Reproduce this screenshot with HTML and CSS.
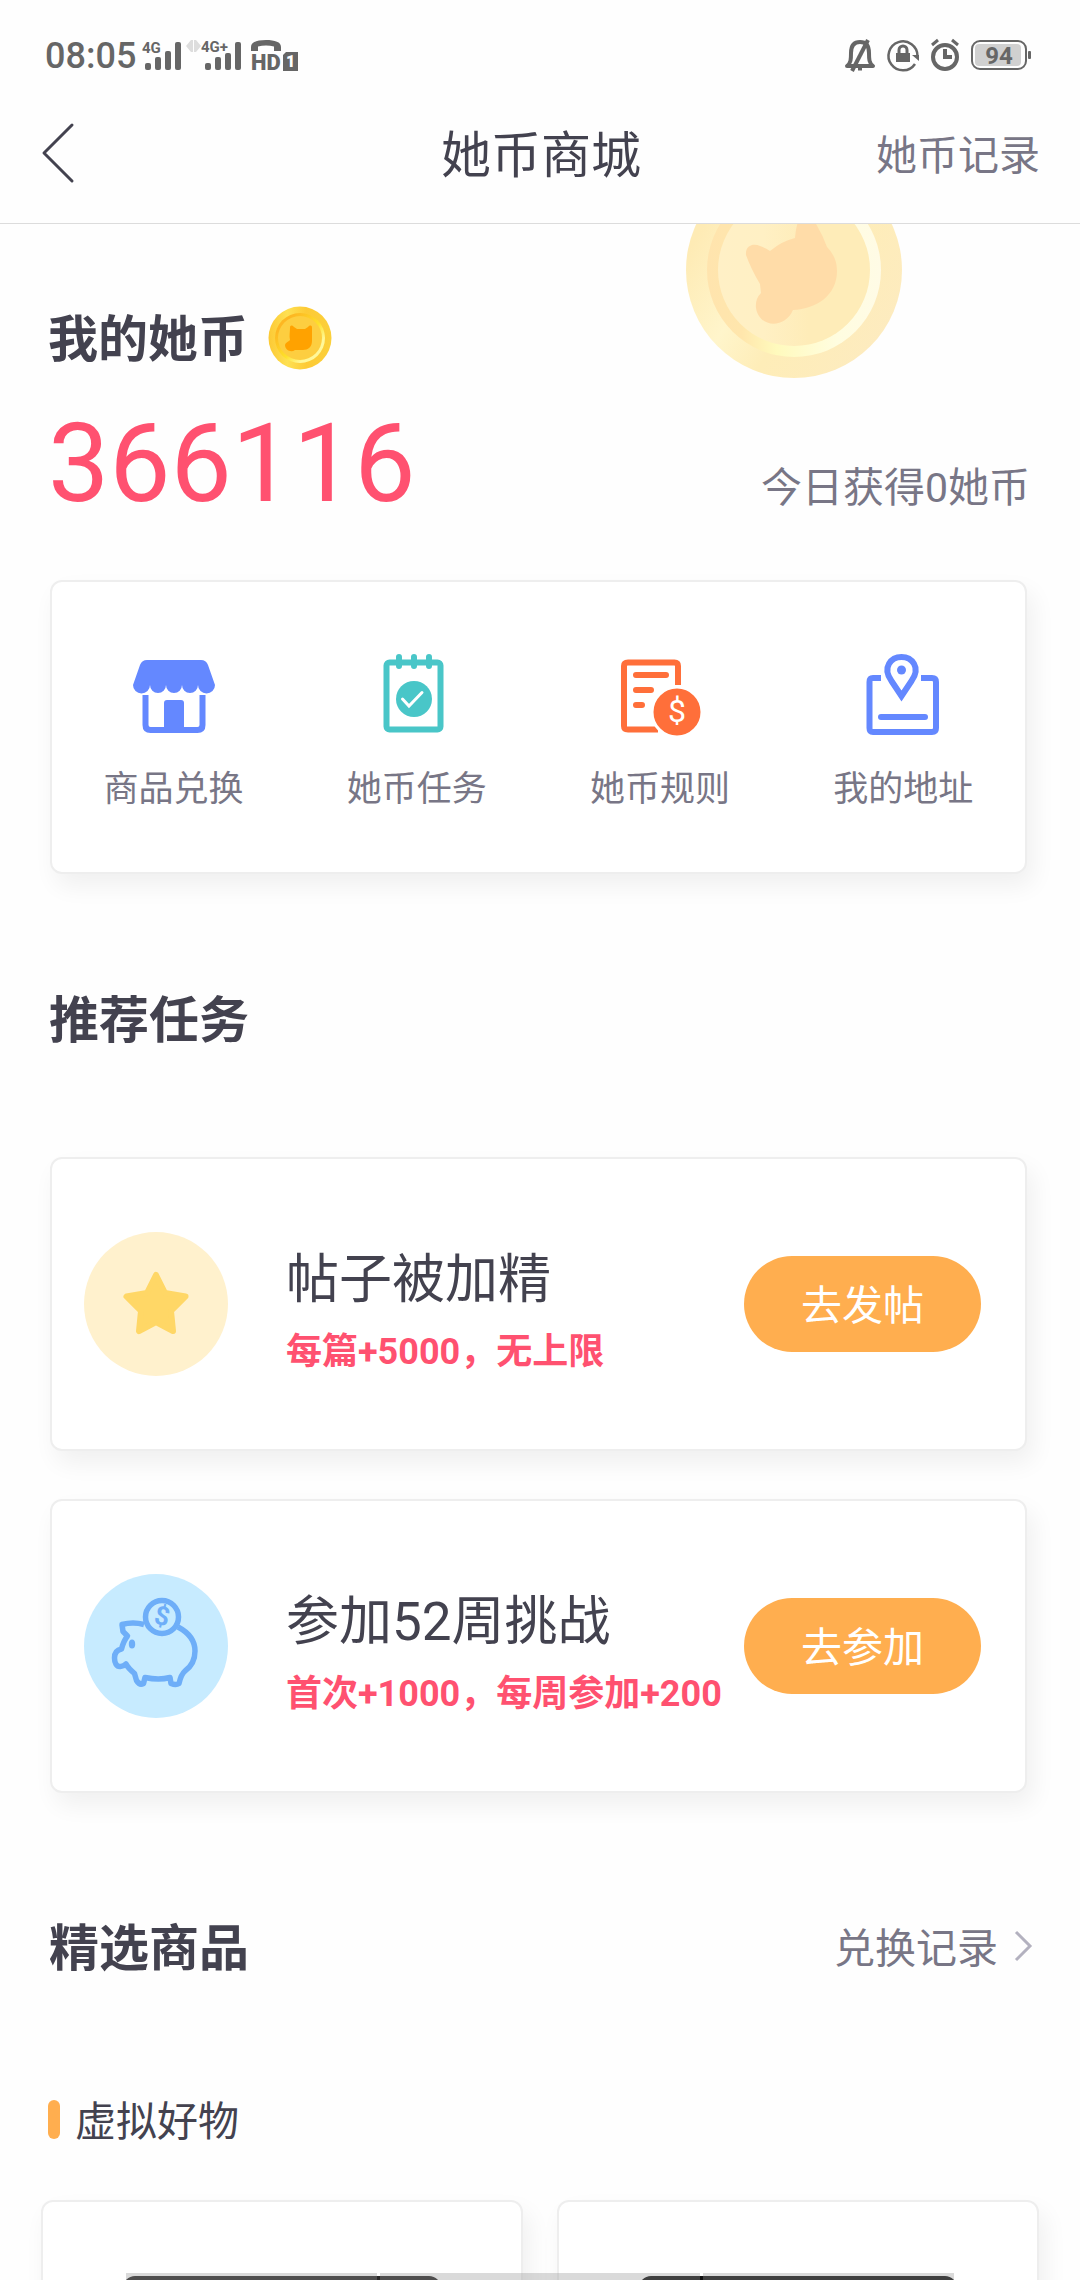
FILE: index.html
```html
<!DOCTYPE html>
<html lang="zh-CN">
<head>
<meta charset="utf-8">
<meta name="viewport" content="width=device-width, initial-scale=1">
<title>她币商城</title>
<link rel="stylesheet" href="styles.css">
</head>
<body>
<div class="app">
  <header class="top">
    <div class="status">
      <span class="status-time">08:05</span>
      <svg class="signal" width="40" height="32" viewBox="0 0 40 32" aria-hidden="true">
        <text class="net" x="0" y="14">4G</text>
        <rect x="3" y="24" width="6" height="7" rx="2"/><rect x="13" y="18" width="6" height="13" rx="2"/><rect x="23" y="12" width="6" height="19" rx="2"/><rect x="33" y="3" width="6" height="28" rx="2"/>
      </svg>
      <svg class="signal signal-data" width="56" height="32" viewBox="0 0 56 32" aria-hidden="true">
        <path class="faint" d="M0 7l5-6h2v12H5zM8 1h2l5 6-5 6H8z"/>
        <text class="net" x="15" y="13">4G+</text>
        <rect x="19" y="24" width="6" height="7" rx="2"/><rect x="29" y="18" width="6" height="13" rx="2"/><rect x="39" y="14" width="6" height="17" rx="2"/><rect x="49" y="3" width="6" height="28" rx="2"/>
      </svg>
      <svg class="volte" width="48" height="33" viewBox="0 0 48 33" aria-hidden="true">
        <path d="M0 12V8C0 3 6 1 15 1s15 2 15 7v4h-7V7.500C18 6 12 6 7 7.500V12z"/>
        <text class="hd" x="0" y="31">HD</text>
        <path d="M35 13h12v19H32V16z"/>
        <text class="sim" x="35" y="28">1</text>
      </svg>
      <div class="status-right">
        <svg width="30" height="33" viewBox="0 0 30 33" fill="none" stroke="#666" stroke-width="4" aria-hidden="true">
          <path d="M2 27c4-3 4-7 4-13C6 6 10 3 15 3s9 3 9 11c0 6 0 10 4 13z" stroke-linejoin="round"/><path d="M7 32L23 1"/><path d="M13 30h4" stroke-width="3"/>
        </svg>
        <svg width="32" height="33" viewBox="0 0 32 33" fill="none" stroke="#666" aria-hidden="true">
          <path d="M30.500 17A14.500 14.500 0 1 0 28 25" stroke-width="2.500"/><path d="M25 16h7v6z" fill="#666" stroke="none"/><rect x="9" y="14" width="14" height="9" fill="#666" stroke="none"/><path d="M12 14v-3a4 4 0 0 1 8 0v3" stroke-width="3"/>
        </svg>
        <svg width="28" height="33" viewBox="0 0 28 33" fill="none" stroke="#666" aria-hidden="true">
          <circle cx="14" cy="18" r="12" stroke-width="4"/><path d="M14 10v8h7" stroke-width="4"/><path d="M1 6l6-5M27 6l-6-5" stroke-width="3"/>
        </svg>
        <svg class="battery" width="60" height="32" viewBox="0 0 60 32" aria-hidden="true">
          <rect x="1" y="2" width="54" height="28" rx="8" fill="none" stroke="#666" stroke-width="2"/><rect x="4" y="5" width="46" height="22" rx="4" fill="#d0d0d0"/><rect x="57" y="12" width="3" height="8" rx="1"/>
          <text x="28" y="25" text-anchor="middle">94</text>
        </svg>
      </div>
    </div>
    <nav class="nav">
      <button class="back" type="button" aria-label="返回"><svg width="32" height="62" viewBox="0 0 32 62" fill="none" stroke="#43424f" stroke-width="3" stroke-linecap="round" stroke-linejoin="round"><path d="M30 2L2 30l28 28"/></svg></button>
      <h1 class="nav-title">她币商城</h1>
      <a class="nav-link" href="#records">她币记录</a>
    </nav>
  </header>

  <main class="content">
    <section class="balance">
      <svg class="coin-bg" width="216" height="216" viewBox="0 0 216 216" aria-hidden="true">
        <defs>
          <linearGradient id="bgRim" x1="0" y1=".2" x2="1" y2=".8"><stop offset=".1" stop-color="#feebb5"/><stop offset=".38" stop-color="#fff5cb"/><stop offset=".58" stop-color="#feedb8"/><stop offset="1" stop-color="#fdebc0"/></linearGradient>
          <linearGradient id="bgRing" x1="0" y1="0" x2="1" y2="0"><stop offset="0" stop-color="#ffe4ae"/><stop offset=".2" stop-color="#ffe6ac"/><stop offset=".4" stop-color="#fffabd"/><stop offset=".75" stop-color="#fffde0"/><stop offset="1" stop-color="#fffbe6"/></linearGradient>
          <linearGradient id="bgFace" x1="0" y1="0" x2="1" y2="0"><stop offset="0" stop-color="#fff0c6"/><stop offset=".3" stop-color="#fff0c4"/><stop offset=".6" stop-color="#feecb8"/><stop offset="1" stop-color="#feecb8"/></linearGradient>
        </defs>
        <circle cx="108" cy="108" r="108" fill="url(#bgRim)"/><circle cx="108" cy="108" r="87" fill="url(#bgRing)"/><circle cx="108" cy="108" r="76" fill="url(#bgFace)"/>
        <path fill="#ffdca8" d="M60 93c-1-10 8-12 14-9q6 2 10 5 12-10 25-13 1-14 5-20c4-5 10-4 13 1q9 14 14 28 10 10 10 24c0 24-20 38-44 39-8 19-34 18-37-2q-1-9 5-15l-1-9q-9-15-14-29z"/>
      </svg>
      <h2 class="heading balance-title"><span>我的她币</span>
        <svg width="64" height="64" viewBox="0 0 64 64" aria-hidden="true">
          <defs>
            <linearGradient id="rim" x1="0" y1="0" x2="1" y2="0"><stop offset="0" stop-color="#fcc934"/><stop offset=".3" stop-color="#fee052"/><stop offset=".6" stop-color="#fdca35"/><stop offset="1" stop-color="#fbd03b"/></linearGradient>
            <linearGradient id="ring" x1="0" y1="0" x2="1" y2="1"><stop offset=".2" stop-color="#fdb722"/><stop offset=".55" stop-color="#fee12b"/><stop offset=".75" stop-color="#fff89a"/></linearGradient>
          </defs>
          <circle cx="32" cy="32" r="31.500" fill="url(#rim)"/><circle cx="32" cy="32" r="25" fill="url(#ring)"/><circle cx="32" cy="32" r="22" fill="#fdce40"/>
          <path fill="#ffa200" d="M22 22c0-3 2-3 4-1l3 2h8l3-2c2-2 4-2 4 1v13c0 6-4 9-9 9h-8c-4 3-10 0-10-5 1-3 3-3 5-5-1-4 0-8 0-12z"/>
        </svg>
      </h2>
      <div class="balance-row">
        <strong class="amount">366116</strong>
        <span class="today">今日获得0她币</span>
      </div>
    </section>

    <nav class="card menu">
      <a class="menu-item" href="#goods">
        <svg width="84" height="84" viewBox="0 0 84 84" fill="#6488ff" aria-hidden="true">
          <path d="M15 8h54q5 0 7 5l7 20a8 8 0 0 1-17 0 8 8 0 0 1-16 0 8 8 0 0 1-16 0 8 8 0 0 1-16 0 8 8 0 0 1-17 0l7-20q2-5 7-5z"/>
          <path d="M13.500 43v30q0 5 5 5h47q5 0 5-5V43" fill="none" stroke="#6488ff" stroke-width="6"/><path d="M32 79V51q0-3 3-3h14q3 0 3 3v28z"/>
        </svg>
        <span>商品兑换</span>
      </a>
      <a class="menu-item" href="#tasks">
        <svg width="84" height="84" viewBox="0 0 84 84" fill="none" stroke="#49c6c8" stroke-width="6" stroke-linecap="round" aria-hidden="true">
          <rect x="11.500" y="10.500" width="54" height="67" rx="3"/><path d="M24 5v9M39 5v9M54 5v9"/><circle cx="39" cy="47" r="18" fill="#49c6c8" stroke="none"/><path d="M27.500 47l6.500 7 13-13.500" stroke="#fff" stroke-width="3"/>
        </svg>
        <span>她币任务</span>
      </a>
      <a class="menu-item" href="#rules">
        <svg width="84" height="84" viewBox="0 0 84 84" fill="none" stroke="#ff6f3a" stroke-width="6" aria-hidden="true">
          <path d="M60 33V14q0-3.500-3.500-3.500H10q-4 0-4 3.500v60q0 3.500 4 3.500h30"/><path d="M18 23h30M18 38h15M18 53h6" stroke-linecap="round"/><circle cx="59" cy="60" r="25" fill="#ff6f3a" stroke="#fff" stroke-width="3"/>
          <text class="dollar" x="59" y="70" text-anchor="middle">$</text>
        </svg>
        <span>她币规则</span>
      </a>
      <a class="menu-item" href="#address">
        <svg width="84" height="84" viewBox="0 0 84 84" fill="none" stroke="#6488ff" stroke-width="6" aria-hidden="true">
          <path d="M20 26h-8q-3.500 0-3.500 4v46q0 4 3.500 4h59q4 0 4-4V30q0-4-4-4H60"/><path d="M20 65h44" stroke-linecap="round"/><path d="M40.500 44q-4-6-10-15c-10-14 0-24 10-24s20 10 10 24q-6 9-10 15z"/><circle cx="40.500" cy="18" r="4.500" fill="#6488ff" stroke="none"/>
        </svg>
        <span>我的地址</span>
      </a>
    </nav>

    <section class="tasks" id="tasks">
      <h2 class="heading">推荐任务</h2>
      <ul class="task-list">
        <li class="card task">
          <svg class="task-icon" width="144" height="144" viewBox="0 0 144 144" aria-hidden="true">
            <circle cx="72" cy="72" r="72" fill="#fff1cd"/>
            <path fill="#ffd766" stroke="#ffd766" stroke-width="6" stroke-linejoin="round" d="M72 43l9 18 20.500 3.500L87 79l2 20-17-9-17 9 2-20-14.500-14.500L63 61z"/>
          </svg>
          <div class="task-text"><h3 class="task-title">帖子被加精</h3><p class="task-reward">每篇+5000，无上限</p></div>
          <button class="pill" type="button">去发帖</button>
        </li>
        <li class="card task">
          <svg class="task-icon" width="144" height="144" viewBox="0 0 144 144" fill="none" stroke="#6eaef8" stroke-width="5.500" stroke-linejoin="round" aria-hidden="true">
            <circle cx="72" cy="72" r="72" fill="#c7ebff" stroke="none"/>
            <path d="M60 50.500q-11-3-22 0l1 7 4.500 4.500q-4 5-6 13c-5 1-7 4-7 9s2 9 6 8.500q3 0 5.500-2.500 2 4 8.500 9.500l2 7q3 5 7 3l1.500-6q14 3 25 0l1 6q5 2 8 0 2-9 6-12.500c7-5 10-11 10-20q0-15-17-24"/>
            <circle cx="78" cy="43" r="16.500"/><ellipse cx="48" cy="70" rx="3.200" ry="4.500" fill="#6eaef8" stroke="none"/>
            <text class="piggy-dollar" x="78" y="51" text-anchor="middle" transform="rotate(12 78 43)">$</text>
          </svg>
          <div class="task-text"><h3 class="task-title">参加52周挑战</h3><p class="task-reward">首次+1000，每周参加+200</p></div>
          <button class="pill" type="button">去参加</button>
        </li>
      </ul>
    </section>

    <section class="goods" id="goods">
      <div class="goods-head">
        <h2 class="heading">精选商品</h2>
        <a class="more" href="#exchanges">兑换记录
          <svg width="16" height="36" viewBox="0 0 16 36" fill="none" stroke="#b3b1bf" stroke-width="3" aria-hidden="true"><path d="M0 1l14 14L0 29"/></svg>
        </a>
      </div>
      <h3 class="sub-heading">虚拟好物</h3>
      <div class="goods-grid">
        <article class="card product"><div class="product-pic"></div></article>
        <article class="card product"><div class="product-pic product-pic-dark"></div></article>
      </div>
    </section>
  </main>
  <div class="gesture-bar" aria-hidden="true"><i class="gesture"></i><i class="gesture gesture-mid"></i><i class="gesture"></i></div>
</div>
</body>
</html>
```
FILE: styles.css
```css
:root {
  --ink: #43424f;
  --muted: #787686;
  --pink: #ff5170;
  --orange: #ffae4f;
}

* { box-sizing: border-box; }

body {
  margin: 0;
  background: #fefefe;
  color: var(--ink);
  font-family: Roboto, "Noto Sans CJK SC", sans-serif;
}

h1, h2, h3, p, ul { margin: 0; padding: 0; }
a { color: inherit; text-decoration: none; }
button { border: 0; padding: 0; background: none; font: inherit; }
svg { display: block; flex: none; overflow: visible; }

.app { display: flex; flex-direction: column; height: 100vh; }

/* status bar and navigation */
.top { flex: none; border-bottom: 1px solid #dcdcdc; }
.status {
  display: flex;
  align-items: center;
  height: 88px;
  padding: 22px 49px 0 45px;
  color: #666;
  fill: #666;
}
.status-time { font-size: 36px; line-height: 40px; padding-top: 2px; font-weight: 500; }
.signal { margin-left: 6px; }
.signal-data { margin-left: 4px; }
.volte { margin-left: 9px; }
.status-right { display: flex; align-items: center; gap: 12px; margin-left: auto; }
.faint { fill: #ddd; }
.net { font-size: 15px; font-weight: 700; }
.hd { font-size: 22px; font-weight: 900; }
.sim { font-size: 16px; font-weight: 900; fill: #fefefe; }
.battery { font-size: 24px; font-weight: 700; }

.nav {
  display: grid;
  grid-template-columns: 1fr auto 1fr;
  align-items: center;
  height: 135px;
  padding: 0 40px 0 42px;
}
.back { justify-self: start; margin-bottom: 4px; }
.nav-title { font-size: 50px; line-height: 64px; font-weight: 400; }
.nav-link { justify-self: end; font-size: 41px; line-height: 60px; color: var(--muted); }

/* scrolling content */
.content { flex: 1; min-height: 0; overflow-y: auto; scrollbar-width: none; }
.heading { font-size: 50px; line-height: 64px; font-weight: 700; }

.balance { position: relative; padding: 82px 50px 0 48px; }
.coin-bg { position: absolute; top: -62px; right: 178px; }
.balance-title { display: flex; align-items: center; gap: 20px; height: 64px; }
.balance-title span { padding-top: 4px; }
.balance-row {
  display: flex;
  justify-content: space-between;
  align-items: flex-end;
  margin-top: 30px;
}
.amount { font-size: 109px; line-height: 128px; font-weight: 400; color: var(--pink); }
.today { padding-bottom: 10px; font-size: 41px; line-height: 60px; color: var(--muted); }

.card {
  border: 2px solid #eee;
  border-radius: 12px;
  background: #fff;
  box-shadow: 6px 12px 24px rgba(0, 0, 0, 0.06);
}

.menu {
  display: grid;
  grid-template-columns: repeat(4, 1fr);
  margin: 52px 53px 0 50px;
  padding: 70px 0 58px;
}
.menu-item {
  display: flex;
  flex-direction: column;
  align-items: center;
  gap: 30px;
  font-size: 35px;
  line-height: 48px;
  color: var(--muted);
}
.dollar { font-size: 32px; fill: #fff; stroke: none; }

.tasks { padding: 115px 53px 0 50px; }
.tasks .heading { margin-left: -1px; }
.task-list { display: grid; gap: 48px; margin-top: 104px; list-style: none; }
.task { display: flex; align-items: center; padding: 73px 44px 73px 32px; }
.task-text { flex: 1; margin-left: 58px; padding-top: 8px; white-space: nowrap; }
.task-title { font-size: 53px; line-height: 80px; font-weight: 400; }
.task-reward { margin-top: 8px; font-size: 36px; line-height: 48px; font-weight: 700; color: var(--pink); }
.piggy-dollar { font-size: 26px; font-weight: 700; fill: #6eaef8; stroke: none; }
.pill {
  flex: none;
  width: 237px;
  height: 96px;
  padding-top: 4px;
  border-radius: 48px;
  background: var(--orange);
  color: #fff;
  font-size: 41px;
  line-height: 60px;
}

.goods { padding: 124px 41px 48px; }
.goods-head { display: flex; justify-content: space-between; align-items: center; padding: 0 7px 0 8px; }
.more {
  display: flex;
  align-items: center;
  gap: 18px;
  font-size: 41px;
  line-height: 60px;
  color: var(--muted);
}
.sub-heading {
  display: flex;
  align-items: center;
  gap: 15px;
  margin-top: 111px;
  padding-left: 7px;
  font-size: 41px;
  line-height: 60px;
  font-weight: 400;
}
.sub-heading::before {
  content: "";
  width: 12px;
  height: 39px;
  margin-bottom: 6px;
  border-radius: 6px;
  background: var(--orange);
}
.goods-grid { display: grid; grid-template-columns: 1fr 1fr; gap: 34px; margin-top: 48px; }
.product { padding: 74px 80px; }
.product-pic { aspect-ratio: 1; border-radius: 12px; background: #2a2828; }
.product-pic-dark { background: #111; }

/* three-part gesture strip over the bottom edge */
.gesture-bar {
  position: fixed;
  inset: auto 126px 0;
  display: flex;
  gap: 3px;
}
.gesture { flex: 252; height: 7px; background: rgba(150, 150, 150, 0.35); }
.gesture-mid { flex: 321; }
```
